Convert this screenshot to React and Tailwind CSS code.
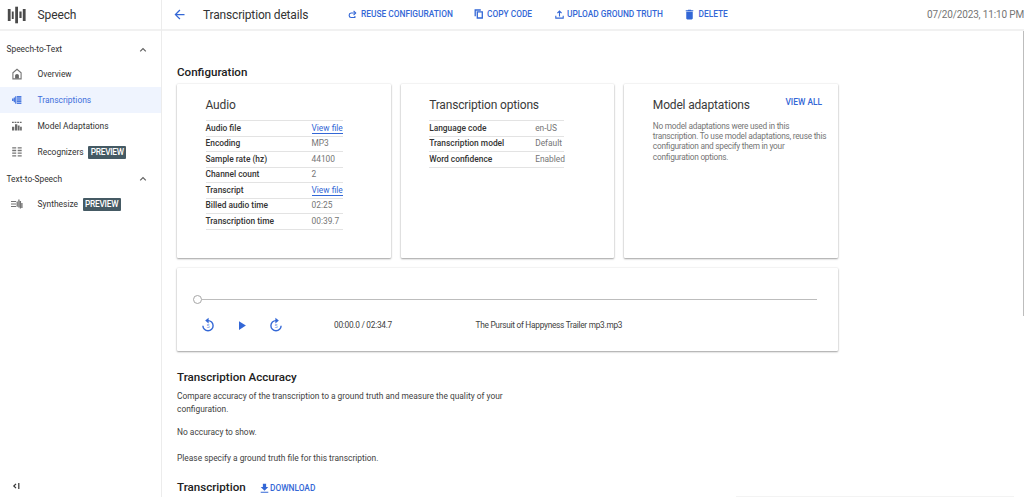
import React, { useState } from "react";
import { MdArrowBack, MdDelete, MdFileDownload, MdPlayArrow } from "react-icons/md";

const audioRows = [
  { label: "Audio file", value: "View file", link: true },
  { label: "Encoding", value: "MP3" },
  { label: "Sample rate (hz)", value: "44100" },
  { label: "Channel count", value: "2" },
  { label: "Transcript", value: "View file", link: true },
  { label: "Billed audio time", value: "02:25" },
  { label: "Transcription time", value: "00:39.7" },
];

const optionRows = [
  { label: "Language code", value: "en-US" },
  { label: "Transcription model", value: "Default" },
  { label: "Word confidence", value: "Enabled" },
];

function SpeechLogo() {
  return (
    <svg width="20" height="18" viewBox="0 0 20 18" fill="#4a4a4a">
      <rect x="0.8" y="3" width="2.8" height="12" />
      <rect x="4.8" y="5.5" width="1.9" height="7.5" />
      <rect x="8.2" y="0.7" width="2.8" height="16.6" />
      <rect x="12.4" y="5.5" width="2.2" height="6.5" />
      <rect x="15.8" y="3" width="2.8" height="12" />
    </svg>
  );
}

function HomeIcon() {
  return (
    <svg width="12" height="12" viewBox="0 0 12 12">
      <path d="M1.9 10.9V4.8L6 1.3l4.1 3.5v6.1z" fill="none" stroke="#757575" strokeWidth="1.1" />
      <path d="M4.1 10.6V7.6a1.9 1.5 0 0 1 3.8 0v3z" fill="#666" />
    </svg>
  );
}

function TranscriptionsIcon() {
  return (
    <svg width="12" height="12" viewBox="0 0 12 12" fill="#4d7be0">
      <path d="M1 4.5h1.5v2.4H1zM2.7 3.4h1.3v4.8H2.7zM4.1 2.2h1.3v7.6H4.1z" />
      <path d="M5.9 2.1h4.5v1.6H5.9zM5.9 4.2h4.5v1.6H5.9zM5.9 6.3h4.5v1.6H5.9zM5.9 8.4h4.5V10H5.9z" />
    </svg>
  );
}

function AdaptationsIcon() {
  return (
    <svg width="12" height="12" viewBox="0 0 12 12" fill="#6b6b6b">
      <path d="M1 1.8h1.8v1.1H1zM3.6 1.8h1.8v1.1H3.6zM6.2 1.8H8v1.1H6.2zM8.8 1.8h1.8v1.1H8.8z" />
      <path d="M1 6.8h2.3v3.6H1zM4 4.2h2.3v6.2H4zM6.8 5.6h1.8v4.8H6.8zM9.1 6.8h1.7v3.6H9.1z" />
    </svg>
  );
}

function RecognizersIcon() {
  return (
    <svg width="12" height="12" viewBox="0 0 12 12" stroke="#757575" strokeWidth="1.3">
      <path d="M1.2 1.8h4M6.7 1.8h4M1.2 4.5h4M6.7 4.5h4M1.2 7.2h4M6.7 7.2h4M1.2 9.9h4M6.7 9.9h4" />
    </svg>
  );
}

function SynthesizeIcon() {
  return (
    <svg width="12" height="12" viewBox="0 0 12 12" fill="none" stroke="#757575" strokeWidth="1">
      <path d="M0 3.5h5M0 6h5M0 8.5h5" />
      <path d="M6.2 3.5v5.2M7.9 1.4v8M9.4 3v7.6M10.9 5v5" strokeWidth="1.3" />
    </svg>
  );
}

function ReuseIcon() {
  return (
    <svg width="9" height="9" viewBox="0 0 9 9" fill="none" stroke="#3367d6" strokeWidth="1.1">
      <path d="M7.5 3H3.1A2 2 0 0 0 1.2 5v.6a2 2 0 0 0 1.9 1.9h3.8V6" />
      <path d="M5.6 .9L7.7 3 5.6 5.1" />
    </svg>
  );
}

function CopyIcon() {
  return (
    <svg width="10" height="10" viewBox="0 0 10 10" fill="none" stroke="#3367d6" strokeWidth="1.3">
      <path d="M3.3 2.9h5v6.1h-5z" />
      <path d="M1.2 7.2V1h5.6" />
    </svg>
  );
}

function UploadIcon() {
  return (
    <svg width="9" height="9" viewBox="0 0 9 9" fill="none" stroke="#3367d6" strokeWidth="1.1">
      <path d="M4.5 6.4V1.2M2.4 3.2l2.1-2.1 2.1 2.1M.8 5.8v2.3h7.4V5.8" />
    </svg>
  );
}

function SeekIcon({ forward }) {
  return (
    <svg width="14" height="16" viewBox="0 0 14 16">
      <g transform={forward ? "translate(14 0) scale(-1 1)" : undefined}>
        <path d="M7 3.6A5.1 5.1 0 1 1 1.9 8.7" fill="none" stroke="#3367d6" strokeWidth="1.4" />
        <path d="M7.6 .8v5.6L4.2 3.6z" fill="#3367d6" />
      </g>
      <text x="7" y="10.7" textAnchor="middle" fontSize="5.5" fill="#6a90e4">5</text>
    </svg>
  );
}

function Chevron() {
  return (
    <svg width="8" height="6" viewBox="0 0 8 6" fill="none" stroke="#616161" strokeWidth="1.2">
      <path d="M1.2 4.4L4 1.6l2.8 2.8" />
    </svg>
  );
}

function NavItem({ icon, label, active, preview, onClick }) {
  return (
    <button
      type="button"
      onClick={onClick}
      className={`flex h-[26px] w-full items-center whitespace-nowrap pl-[11px] text-[8.45px] ${
        active ? "bg-[#eff4fe] text-[#3f6fdc]" : "text-[#333]"
      }`}
    >
      {icon}
      <span className="ml-[14.5px]">{label}</span>
      {preview && (
        <span className="ml-[4.5px] flex h-[13px] items-center rounded-[1px] bg-[#455a64] px-[2.5px] text-[8.3px] font-medium tracking-[-0.25px] text-white">
          PREVIEW
        </span>
      )}
    </button>
  );
}

function NavHeading({ children, className }) {
  return (
    <div className={`flex items-center justify-between pl-[6.5px] pr-[14px] text-[8.4px] text-[#333] ${className}`}>
      {children}
      <Chevron />
    </div>
  );
}

function ActionButton({ icon, children, className }) {
  return (
    <button type="button" className={`flex items-center whitespace-nowrap text-[8.35px] font-medium text-[#3367d6] ${className}`}>
      {icon}
      {children}
    </button>
  );
}

function Card({ title, action, children }) {
  return (
    <div className="h-[174px] rounded-[1px] bg-white px-[28.5px] pt-[13px] shadow-[0_1px_2px_rgba(0,0,0,0.35),0_0_2px_rgba(0,0,0,0.12)]">
      <div className="flex h-4 items-center justify-between whitespace-nowrap">
        <h3 className="text-[12px] tracking-[-0.17px] text-[#3a3a3a]">{title}</h3>
        {action}
      </div>
      {children}
    </div>
  );
}

function DetailsTable({ rows, className }) {
  return (
    <dl className={`mt-[7px] border-t border-[#e3e3e3] text-[8.4px] ${className}`}>
      {rows.map((row) => (
        <div key={row.label} className="flex h-[15.5px] items-center whitespace-nowrap border-b border-[#e3e3e3]">
          <dt className="w-[106px] shrink-0 font-medium text-[#333]">{row.label}</dt>
          <dd className="text-[#757575]">
            {row.link ? (
              <a href="#" className="block border-b border-[#3367d6] leading-[10px] text-[#3367d6]">{row.value}</a>
            ) : (
              row.value
            )}
          </dd>
        </div>
      ))}
    </dl>
  );
}

export default function App() {
  const [active, setActive] = useState("Transcriptions");

  const navItem = (label, icon, preview) => (
    <NavItem
      label={label}
      icon={icon}
      preview={preview}
      active={active === label}
      onClick={() => setActive(label)}
    />
  );

  return (
    <div className="relative flex h-[497px] w-[1024px] overflow-hidden bg-white font-['Roboto',sans-serif]">
      <aside className="flex w-[162px] shrink-0 flex-col border-r border-[#ececec]">
        <div className="flex h-[31px] shrink-0 items-center border-b-2 border-[#f1f1f1] pl-[7px]">
          <SpeechLogo />
          <span className="ml-[10.5px] text-[12px] tracking-[-0.1px] text-[#333]">Speech</span>
        </div>
        <NavHeading className="h-[30px] pt-[7px]">Speech-to-Text</NavHeading>
        {navItem("Overview", <HomeIcon />)}
        {navItem("Transcriptions", <TranscriptionsIcon />)}
        {navItem("Model Adaptations", <AdaptationsIcon />)}
        {navItem("Recognizers", <RecognizersIcon />, true)}
        <NavHeading className="h-[26px] pt-[2px]">Text-to-Speech</NavHeading>
        {navItem("Synthesize", <SynthesizeIcon />, true)}
        <button type="button" className="mt-auto mb-[7px] ml-[12px] w-2">
          <svg width="8" height="8" viewBox="0 0 8 8" fill="none" stroke="#333" strokeWidth="1.2">
            <path d="M4 1.8L1.8 4 4 6.2M6.8 1v6" />
          </svg>
        </button>
      </aside>

      <div className="flex min-w-0 flex-1 flex-col">
        <header className="flex h-[31px] shrink-0 items-center whitespace-nowrap border-b-2 border-[#f1f1f1] pl-[10px]">
          <MdArrowBack className="size-[15px] shrink-0 text-[#3367d6]" />
          <h1 className="ml-[16px] w-[145px] text-[12px] tracking-[-0.17px] text-[#333]">Transcription details</h1>
          <ActionButton className="w-[126px] gap-[4px]" icon={<ReuseIcon />}>REUSE CONFIGURATION</ActionButton>
          <ActionButton className="w-[81px] gap-[3px]" icon={<CopyIcon />}>COPY CODE</ActionButton>
          <ActionButton className="w-[128px] gap-[3px]" icon={<UploadIcon />}>UPLOAD GROUND TRUTH</ActionButton>
          <ActionButton className="gap-[2.5px]" icon={<MdDelete className="size-[13px]" />}>DELETE</ActionButton>
          <span className="ml-auto text-[10px] tracking-[-0.15px] text-[#757575]">07/20/2023, 11:10 PM</span>
        </header>

        <main className="w-[676px] pl-[15px] pt-[33px]">
          <h2 className="h-5 text-[11.6px] font-medium leading-4 text-[#212121]">Configuration</h2>
          <div className="grid grid-cols-3 gap-2.5">
            <Card title="Audio">
              <DetailsTable rows={audioRows} className="w-[137px]" />
            </Card>
            <Card title="Transcription options">
              <DetailsTable rows={optionRows} className="w-[135px]" />
            </Card>
            <Card
              title="Model adaptations"
              action={<button type="button" className="-mr-[12.5px] -mt-[5px] text-[8.4px] font-medium text-[#3367d6]">VIEW ALL</button>}
            >
              <p className="mt-[7.5px] whitespace-nowrap text-[8.3px] leading-[10.4px] tracking-[-0.25px] text-[#757575]">
                No model adaptations were used in this<br />
                transcription. To use model adaptations, reuse this<br />
                configuration and specify them in your<br />
                configuration options.
              </p>
            </Card>
          </div>

          <div className="mt-2.5 h-[83px] rounded-[1px] pl-4 pr-[21px] pt-[27px] shadow-[0_1px_2px_rgba(0,0,0,0.35),0_0_2px_rgba(0,0,0,0.12)]">
            <div className="flex items-center">
              <span className="size-[9px] rounded-full border-[1.5px] border-[#a6a6a6]" />
              <span className="h-[1.5px] flex-1 bg-[#bdbdbd]" />
            </div>
            <div className="mt-[13px] flex h-4 items-center whitespace-nowrap pl-[8px] text-[8.3px] tracking-[-0.27px] text-[#424242]">
              <SeekIcon />
              <MdPlayArrow className="ml-[19px] size-[15px] text-[#3367d6]" />
              <span className="ml-[20px]"><SeekIcon forward /></span>
              <span className="ml-[51px] w-[141.5px]">00:00.0 / 02:34.7</span>
              <span>The Pursuit of Happyness Trailer mp3.mp3</span>
            </div>
          </div>

          <h2 className="mt-[18px] text-[11.6px] font-medium leading-4 text-[#212121]">Transcription Accuracy</h2>
          <div className="mt-[5px] whitespace-nowrap text-[8.4px] leading-[13px] text-[#424242]">
            <p>
              Compare accuracy of the transcription to a ground truth and measure the quality of your
              <br />
              configuration.
            </p>
            <p className="mt-[10px]">No accuracy to show.</p>
            <p className="mt-[13px]">Please specify a ground truth file for this transcription.</p>
          </div>

          <div className="mt-[15px] flex h-4 items-center">
            <h2 className="w-[81px] text-[11.6px] font-medium text-[#212121]">Transcription</h2>
            <ActionButton icon={<MdFileDownload className="-mr-px size-[13px]" />}>DOWNLOAD</ActionButton>
          </div>
        </main>
      </div>

      {/* page scrollbar and the top edge of the bottom panel */}
      <div className="absolute right-0 top-[31px] h-[285px] w-[1.5px] bg-[#bdbdbd]" />
      <div className="absolute bottom-0 left-[736px] h-px w-[278px] bg-[#f3f3f3]" />
    </div>
  );
}
